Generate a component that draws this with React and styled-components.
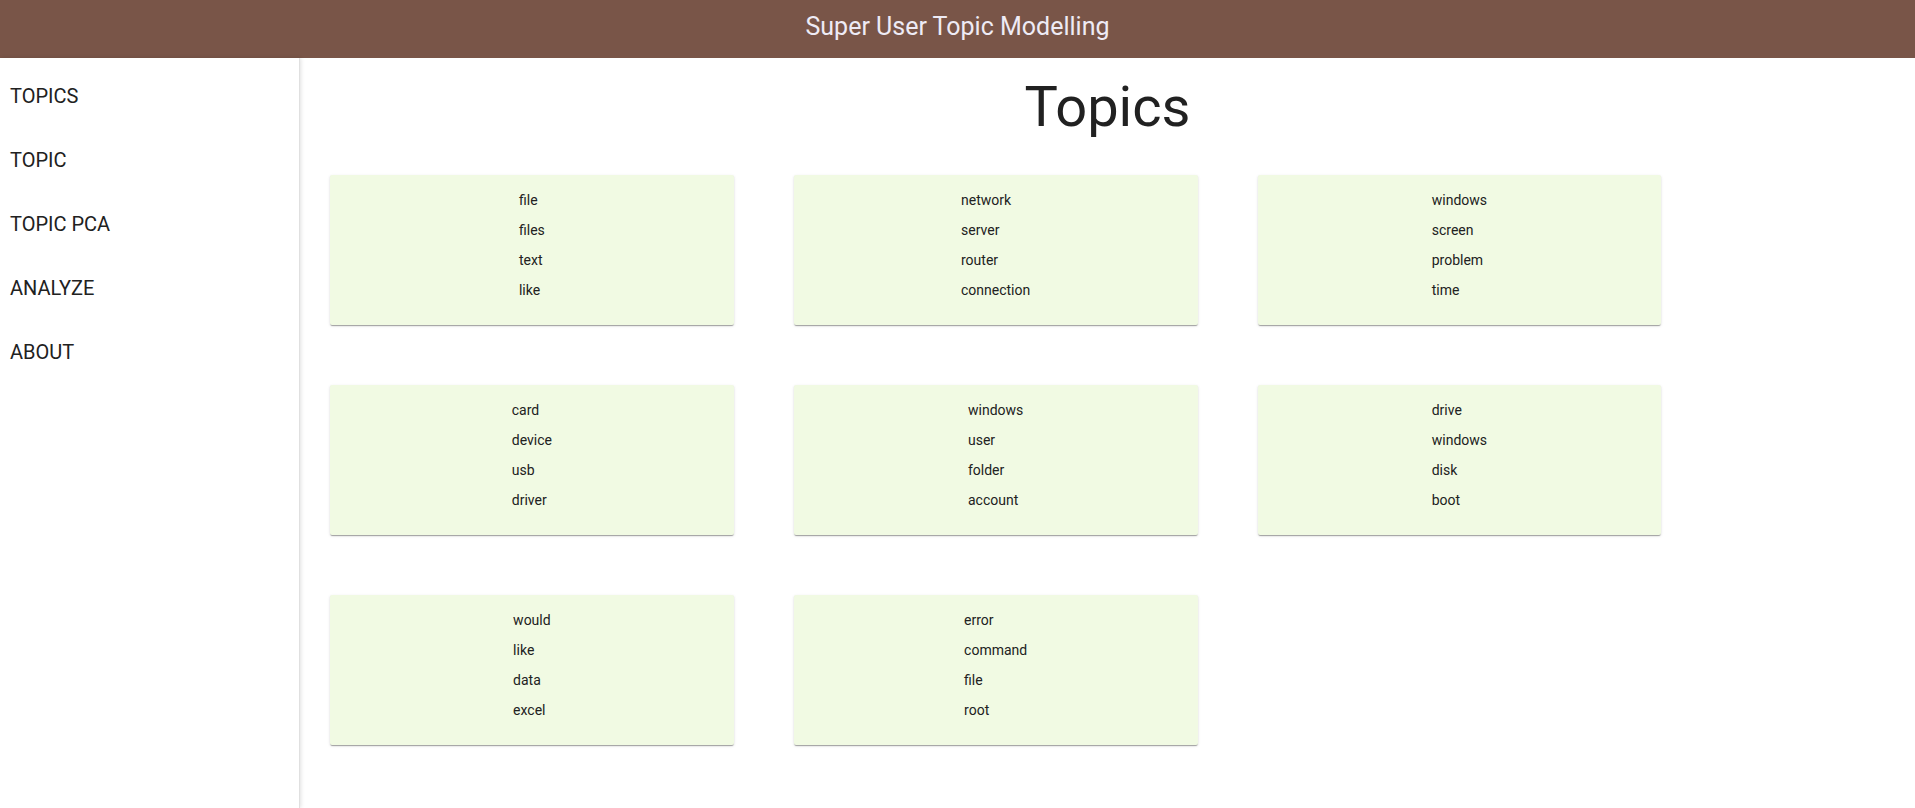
import styled, { createGlobalStyle } from "styled-components";

const GlobalStyle = createGlobalStyle`
  html, body {
    margin: 0;
    padding: 0;
    background: #fff;
    font-family: Roboto, "Noto Sans", "Liberation Sans", sans-serif;
    color: rgba(0, 0, 0, 0.87);
  }
`;

const topics = [
  ["file", "files", "text", "like"],
  ["network", "server", "router", "connection"],
  ["windows", "screen", "problem", "time"],
  ["card", "device", "usb", "driver"],
  ["windows", "user", "folder", "account"],
  ["drive", "windows", "disk", "boot"],
  ["would", "like", "data", "excel"],
  ["error", "command", "file", "root"],
];

const navItems = ["TOPICS", "TOPIC", "TOPIC PCA", "ANALYZE", "ABOUT"];

const Page = styled.div`
  display: flex;
  flex-direction: column;
  min-height: 100vh;
`;

const AppBar = styled.header`
  height: 58px;
  box-sizing: border-box;
  padding-top: 12px;
  background: #795548;
  display: flex;
  justify-content: center;
  align-items: flex-start;
`;

const AppTitle = styled.h1`
  margin: 0;
  font-size: 25px;
  line-height: 29px;
  font-weight: 400;
  color: #eeebf5;
`;

const Body = styled.div`
  flex: 1;
  display: flex;
`;

const Sidebar = styled.nav`
  width: 300px;
  flex-shrink: 0;
  box-sizing: border-box;
  padding-top: 6px;
  border-right: 1px solid #e0e0e0;
  box-shadow: 1px 0 4px rgba(0, 0, 0, 0.12);
`;

const NavItem = styled.a`
  display: block;
  padding: 20px 10px;
  font-size: 20px;
  line-height: 24px;
  color: #212121;
  text-decoration: none;
  cursor: pointer;
`;

const Main = styled.main`
  flex: 1;
  min-width: 0;
`;

const Heading = styled.h2`
  margin: 15px 0 4px;
  font-size: 56px;
  line-height: 68px;
  font-weight: 400;
  text-align: center;
  color: #212121;
`;

const CardGrid = styled.div`
  display: flex;
  flex-wrap: wrap;
`;

const Card = styled.div`
  width: 25%;
  margin: 30px;
  height: 150px;
  box-sizing: border-box;
  padding: 10px 0 20px;
  background: #f1fae3;
  border-radius: 2px;
  text-align: center;
  box-shadow: 0 2px 1px -1px rgba(0, 0, 0, 0.2), 0 1px 1px 0 rgba(0, 0, 0, 0.14),
    0 1px 3px 0 rgba(0, 0, 0, 0.12);
`;

const WordList = styled.ul`
  display: inline-block;
  margin: 0;
  padding: 0;
  list-style: none;
  text-align: left;
`;

const Word = styled.li`
  font-size: 14px;
  line-height: 30px;
  color: #212121;
`;

export default function App() {
  return (
    <Page>
      <GlobalStyle />
      <AppBar>
        <AppTitle>Super User Topic Modelling</AppTitle>
      </AppBar>
      <Body>
        <Sidebar>
          {navItems.map((item) => (
            <NavItem key={item}>{item}</NavItem>
          ))}
        </Sidebar>
        <Main>
          <Heading>Topics</Heading>
          <CardGrid>
            {topics.map((words, i) => (
              <Card key={i}>
                <WordList>
                  {words.map((w, j) => (
                    <Word key={j}>{w}</Word>
                  ))}
                </WordList>
              </Card>
            ))}
          </CardGrid>
        </Main>
      </Body>
    </Page>
  );
}
